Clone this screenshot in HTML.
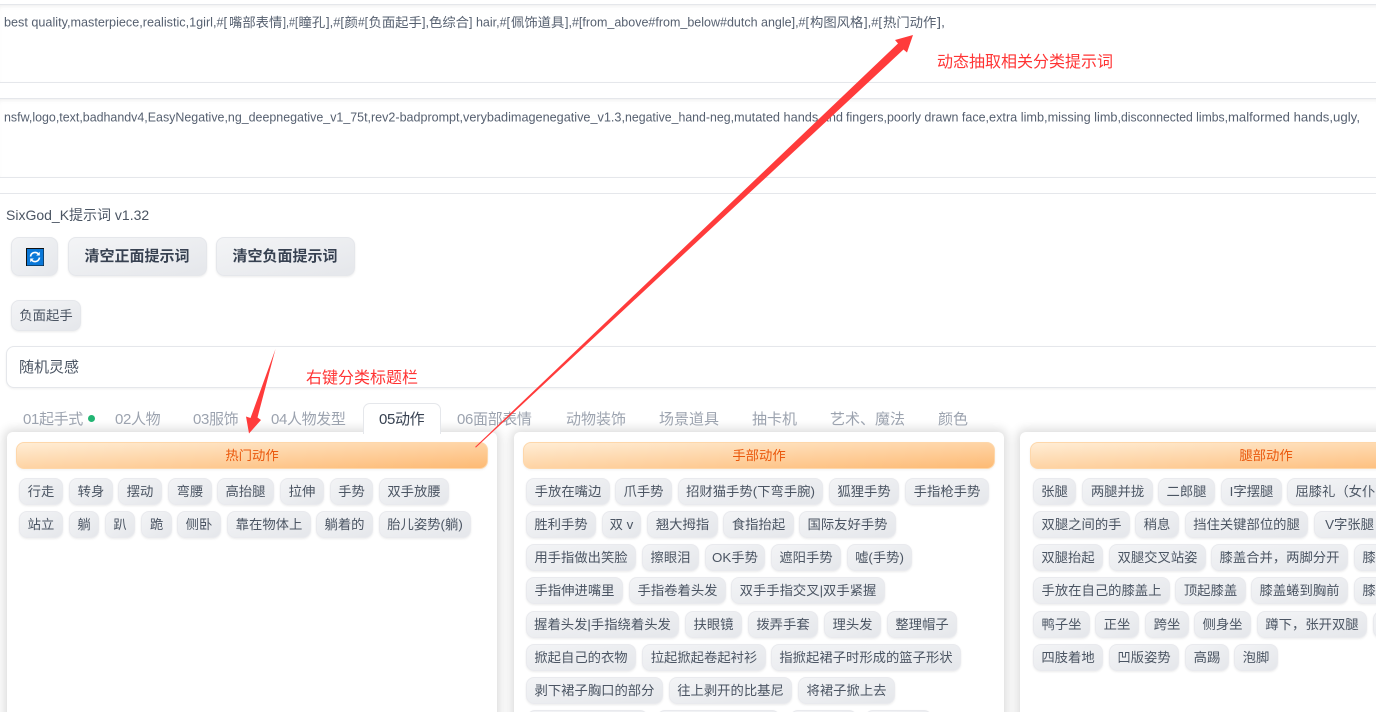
<!DOCTYPE html>
<html lang="zh">
<head>
<meta charset="utf-8">
<title>SixGod_K提示词</title>
<style>
html,body{margin:0;padding:0;background:#fff;width:1376px;height:712px;overflow:hidden}
body{font-family:"Liberation Sans","Noto Sans CJK SC",sans-serif;color:#4b5563}
#w{position:relative;width:1376px;height:712px;overflow:hidden}
.a{position:absolute}
.ta{position:absolute;left:-2px;width:1382px;border:1px solid #e5e7eb;box-shadow:inset 0 2px 3px rgba(0,0,0,.05);box-sizing:border-box;background:#fff}
.t{position:absolute;top:409px;height:22px;line-height:22px;font-size:15px;color:#9ca3af;white-space:nowrap;text-align:center}
.n{letter-spacing:-.35px}
.btn{position:absolute;box-sizing:border-box;border:1px solid #e5e7eb;border-radius:8px;background:linear-gradient(to bottom right,#f3f4f6,#e5e7eb);box-shadow:0 1px 2px rgba(0,0,0,.08);text-align:center;color:#374151;white-space:nowrap}
.p{position:absolute;top:432px;width:490px;height:300px;background:#fff;border-radius:6px;box-shadow:0 0 10px 3px rgba(0,0,0,.14)}
.h{position:absolute;top:442px;width:472px;height:27px;line-height:26px;box-sizing:border-box;border:1px solid #fed7aa;border-radius:8px;background:linear-gradient(to bottom right,#ffedd5,#fdba74);text-align:center;color:#ea580c;font-size:13.33px;box-shadow:0 1px 2px rgba(0,0,0,.06)}
.c{position:absolute;height:27px;line-height:26px;box-sizing:border-box;border:1px solid #e9eaee;border-radius:8px;background:linear-gradient(to bottom right,#f3f4f6,#e5e7eb);box-shadow:0 1px 2px rgba(0,0,0,.08);text-align:center;font-size:13.33px;color:#4b5563;white-space:nowrap;overflow:hidden}
.r1{top:478px}.r2{top:511px}.r3{top:544px}.r4{top:577px}.r5{top:611px}.r6{top:644px}.r7{top:677px}.r8{top:710px}
.red{position:absolute;color:#ff3434;font-size:16px;line-height:22px;white-space:nowrap;z-index:12}
svg.o{position:absolute;left:0;top:0;z-index:10}
svg text{font-family:"Liberation Sans","Noto Sans CJK SC",sans-serif;font-size:13px;fill:#566070}
</style>
</head>
<body>
<div id="w">
<div class="ta" style="top:4px;height:79px"></div>
<div class="ta" style="top:98px;height:80px"></div>
<div class="a" style="left:0;top:193px;width:1376px;height:1px;background:#e5e7eb"></div>

<svg class="o" style="z-index:1" width="1376" height="140" viewBox="0 0 1376 140">
<text x="4" y="26.500" textLength="223" lengthAdjust="spacingAndGlyphs">best quality,masterpiece,realistic,1girl,#[</text>
<text x="229" y="27" style="font-size:13.33px">嘴部表情</text>
<text x="283" y="26.500" textLength="15" lengthAdjust="spacingAndGlyphs">],#[</text>
<text x="298.500" y="27" style="font-size:13.33px">瞳孔</text>
<text x="326" y="26.500" textLength="18" lengthAdjust="spacingAndGlyphs">],#[</text>
<text x="344.500" y="27" style="font-size:13.33px">颜</text>
<text x="358" y="26.500" textLength="10" lengthAdjust="spacingAndGlyphs">#[</text>
<text x="368.500" y="27" style="font-size:13.33px">负面起手</text>
<text x="422" y="26.500" textLength="7" lengthAdjust="spacingAndGlyphs">],</text>
<text x="429" y="27" style="font-size:13.33px">色综合</text>
<text x="469" y="26.500" textLength="41" lengthAdjust="spacingAndGlyphs">] hair,#[</text>
<text x="511" y="27" style="font-size:13.33px">佩饰道具</text>
<text x="565" y="26.500" textLength="244" lengthAdjust="spacingAndGlyphs">],#[from_above#from_below#dutch angle],#[</text>
<text x="810" y="27" style="font-size:13.33px">构图风格</text>
<text x="864" y="26.500" textLength="18" lengthAdjust="spacingAndGlyphs">],#[</text>
<text x="883" y="27" style="font-size:13.33px">热门动作</text>
<text x="937" y="26.500" textLength="8" lengthAdjust="spacingAndGlyphs">],</text>

<text x="4" y="121.500" textLength="367" lengthAdjust="spacingAndGlyphs">nsfw,logo,text,badhandv4,EasyNegative,ng_deepnegative_v1_75t,</text>
<text x="371" y="121.500" textLength="92" lengthAdjust="spacingAndGlyphs">rev2-badprompt,</text>
<text x="463" y="121.500" textLength="162" lengthAdjust="spacingAndGlyphs">verybadimagenegative_v1.3,</text>
<text x="625" y="121.500" textLength="109" lengthAdjust="spacingAndGlyphs">negative_hand-neg,</text>
<text x="734" y="121.500" textLength="109" lengthAdjust="spacingAndGlyphs">mutated hands and</text>
<text x="846" y="121.500" textLength="143" lengthAdjust="spacingAndGlyphs">fingers,poorly drawn face,</text>
<text x="989" y="121.500" textLength="132" lengthAdjust="spacingAndGlyphs">extra limb,missing limb,</text>
<text x="1121" y="121.500" textLength="107" lengthAdjust="spacingAndGlyphs">disconnected limbs,</text>
<text x="1228" y="121.500" textLength="105" lengthAdjust="spacingAndGlyphs">malformed hands,</text>
<text x="1333" y="121.500" textLength="27" lengthAdjust="spacingAndGlyphs">ugly,</text>
</svg>

<div class="a" style="left:6px;top:205px;height:20px;line-height:20px;font-size:14px;color:#4b5563;white-space:nowrap">SixGod_K提示词 v1.32</div>

<div class="btn" style="left:11px;top:237px;width:47px;height:39px"></div>
<svg class="a" style="left:26px;top:248px" width="18" height="18" viewBox="0 0 18 18">
<rect x="0" y="0" width="18" height="18" fill="#111"/>
<rect x="1" y="1" width="16.500" height="16.500" fill="#0a78d8"/>
<path d="M4.500 8.500A4.600 4.600 0 0 1 12.500 6" fill="none" stroke="#fff" stroke-width="1.600"/>
<path d="M13.500 9.500A4.600 4.600 0 0 1 5.500 12" fill="none" stroke="#fff" stroke-width="1.600"/>
<path d="M13.800 3.800V7.500H10.200Z M4.200 14.200V10.500H7.800Z" fill="#fff"/>
</svg>
<div class="btn" style="left:68px;top:237px;width:139px;height:39px;line-height:38px;font-size:15px;font-weight:700;padding-right:1px">清空正面提示词</div>
<div class="btn" style="left:216px;top:237px;width:139px;height:39px;line-height:38px;font-size:15px;font-weight:700;padding-right:1px">清空负面提示词</div>
<div class="btn" style="left:11px;top:300px;width:70px;height:31px;line-height:29px;font-size:13.33px;color:#4b5563">负面起手</div>

<div class="a" style="left:6px;top:346px;width:1400px;height:42px;box-sizing:border-box;border:1px solid #e5e7eb;border-radius:8px;background:#fff;box-shadow:0 1px 2px rgba(0,0,0,.06);line-height:41px;padding-left:12px;font-size:15px;color:#4b5563">随机灵感</div>

<div class="p" style="left:7px"></div>
<div class="p" style="left:514px"></div>
<div class="p" style="left:1020px"></div>

<div class="t n" style="left:23px">01起手式</div>
<div class="a" style="left:88px;top:415px;width:7px;height:7px;border-radius:50%;background:#22b573"></div>
<div class="t n" style="left:115px">02人物</div>
<div class="t n" style="left:193px">03服饰</div>
<div class="t n" style="left:271px">04人物发型</div>
<div class="a" style="left:363px;top:403px;width:78px;height:31px;box-sizing:border-box;border:1px solid #e5e7eb;border-bottom:0;border-radius:7px 7px 0 0;background:#fff"></div>
<div class="t n" style="left:379px;color:#374151">05动作</div>
<div class="t n" style="left:457px">06面部表情</div>
<div class="t" style="left:566px">动物装饰</div>
<div class="t" style="left:659px">场景道具</div>
<div class="t" style="left:752px">抽卡机</div>
<div class="t" style="left:830px">艺术、魔法</div>
<div class="t" style="left:938px">颜色</div>

<div class="h" style="left:16px">热门动作</div>
<div class="h" style="left:523px">手部动作</div>
<div class="h" style="left:1030px">腿部动作</div>

<!-- panel 1 -->
<div class="c r1" style="left:19px;width:44px">行走</div>
<div class="c r1" style="left:69px;width:44px">转身</div>
<div class="c r1" style="left:118px;width:44px">摆动</div>
<div class="c r1" style="left:168px;width:44px">弯腰</div>
<div class="c r1" style="left:217px;width:57px">高抬腿</div>
<div class="c r1" style="left:280px;width:44px">拉伸</div>
<div class="c r1" style="left:330px;width:43px">手势</div>
<div class="c r1" style="left:379px;width:70px">双手放腰</div>
<div class="c r2" style="left:19px;width:44px">站立</div>
<div class="c r2" style="left:69px;width:30px">躺</div>
<div class="c r2" style="left:105px;width:30px">趴</div>
<div class="c r2" style="left:141px;width:31px">跪</div>
<div class="c r2" style="left:177px;width:44px">侧卧</div>
<div class="c r2" style="left:227px;width:84px">靠在物体上</div>
<div class="c r2" style="left:316px;width:57px">躺着的</div>
<div class="c r2" style="left:379px;width:92px">胎儿姿势(躺)</div>

<!-- panel 2 -->
<div class="c r1" style="left:526px;width:84px">手放在嘴边</div>
<div class="c r1" style="left:615px;width:57px">爪手势</div>
<div class="c r1" style="left:678px;width:145px">招财猫手势(下弯手腕)</div>
<div class="c r1" style="left:829px;width:70px">狐狸手势</div>
<div class="c r1" style="left:905px;width:84px">手指枪手势</div>
<div class="c r2" style="left:526px;width:70px">胜利手势</div>
<div class="c r2" style="left:602px;width:39px">双 v</div>
<div class="c r2" style="left:647px;width:71px">翘大拇指</div>
<div class="c r2" style="left:723px;width:71px">食指抬起</div>
<div class="c r2" style="left:799px;width:97px">国际友好手势</div>
<div class="c r3" style="left:526px;width:110px">用手指做出笑脸</div>
<div class="c r3" style="left:642px;width:57px">擦眼泪</div>
<div class="c r3" style="left:705px;width:60px">OK手势</div>
<div class="c r3" style="left:771px;width:70px">遮阳手势</div>
<div class="c r3" style="left:847px;width:65px">嘘(手势)</div>
<div class="c r4" style="left:526px;width:97px">手指伸进嘴里</div>
<div class="c r4" style="left:629px;width:97px">手指卷着头发</div>
<div class="c r4" style="left:731px;width:154px">双手手指交叉|双手紧握</div>
<div class="c r5" style="left:526px;width:153px">握着头发|手指绕着头发</div>
<div class="c r5" style="left:685px;width:57px">扶眼镜</div>
<div class="c r5" style="left:748px;width:70px">拨弄手套</div>
<div class="c r5" style="left:824px;width:57px">理头发</div>
<div class="c r5" style="left:887px;width:70px">整理帽子</div>
<div class="c r6" style="left:526px;width:110px">掀起自己的衣物</div>
<div class="c r6" style="left:642px;width:124px">拉起掀起卷起衬衫</div>
<div class="c r6" style="left:771px;width:190px">指掀起裙子时形成的篮子形状</div>
<div class="c r7" style="left:526px;width:137px">剥下裙子胸口的部分</div>
<div class="c r7" style="left:669px;width:123px">往上剥开的比基尼</div>
<div class="c r7" style="left:798px;width:97px">将裙子掀上去</div>
<div class="c r8" style="left:527px;width:121px"></div>
<div class="c r8" style="left:657px;width:123px"></div>
<div class="c r8" style="left:790px;width:67px"></div>
<div class="c r8" style="left:865px;width:67px"></div>

<!-- panel 3 -->
<div class="c r1" style="left:1033px;width:43px">张腿</div>
<div class="c r1" style="left:1082px;width:71px">两腿并拢</div>
<div class="c r1" style="left:1158px;width:57px">二郎腿</div>
<div class="c r1" style="left:1221px;width:61px">I字摆腿</div>
<div class="c r1" style="left:1287px;width:110px">屈膝礼（女仆）</div>
<div class="c r2" style="left:1033px;width:97px">双腿之间的手</div>
<div class="c r2" style="left:1135px;width:44px">稍息</div>
<div class="c r2" style="left:1185px;width:123px">挡住关键部位的腿</div>
<div class="c r2" style="left:1314px;width:71px">V字张腿</div>
<div class="c r3" style="left:1033px;width:70px">双腿抬起</div>
<div class="c r3" style="left:1109px;width:97px">双腿交叉站姿</div>
<div class="c r3" style="left:1211px;width:137px">膝盖合并，两脚分开</div>
<div class="c r3" style="left:1354px;width:70px">膝盖并拢</div>
<div class="c r4" style="left:1033px;width:137px">手放在自己的膝盖上</div>
<div class="c r4" style="left:1175px;width:71px">顶起膝盖</div>
<div class="c r4" style="left:1251px;width:97px">膝盖蜷到胸前</div>
<div class="c r4" style="left:1354px;width:70px">膝盖弯曲</div>
<div class="c r5" style="left:1033px;width:57px">鸭子坐</div>
<div class="c r5" style="left:1095px;width:44px">正坐</div>
<div class="c r5" style="left:1145px;width:44px">跨坐</div>
<div class="c r5" style="left:1194px;width:57px">侧身坐</div>
<div class="c r5" style="left:1257px;width:110px">蹲下，张开双腿</div>
<div class="c r5" style="left:1373px;width:44px"></div>
<div class="c r6" style="left:1033px;width:70px">四肢着地</div>
<div class="c r6" style="left:1109px;width:70px">凹版姿势</div>
<div class="c r6" style="left:1185px;width:44px">高踢</div>
<div class="c r6" style="left:1234px;width:44px">泡脚</div>

<div class="red" style="left:937px;top:52px">动态抽取相关分类提示词</div>
<div class="red" style="left:306px;top:368px">右键分类标题栏</div>

<svg class="o" width="1376" height="712" viewBox="0 0 1376 712">
<path d="M475 447L898 43.500L895 40L913 35L907 52.500L903.500 49.500L476 447.500Z" fill="#ff3b3b"/>
<path d="M275.500 349L257.500 417.500L261 420L249 433.500L246 416.500L250.500 418Z" fill="#ff3b3b"/>
</svg>
</div>
</body>
</html>
